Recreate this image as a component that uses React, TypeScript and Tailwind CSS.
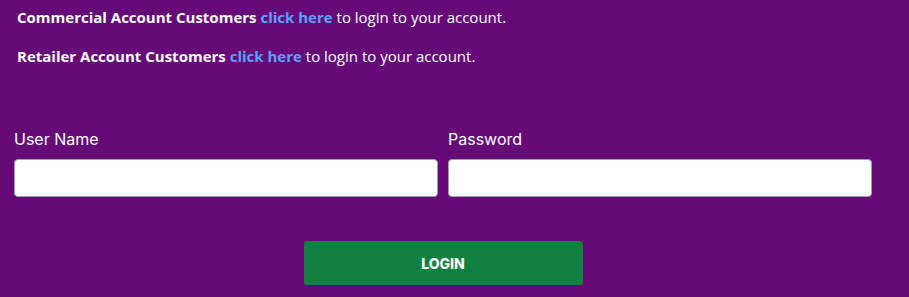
import React from "react";

function LoginLine({ label }: { label: string }) {
  return (
    <p className="text-[15px] leading-5 text-white">
      <span className="font-bold">{label}</span>{" "}
      <a href="#" className="font-bold text-[#58a2ff]">
        click here
      </a>{" "}
      to login to your account.
    </p>
  );
}

export default function App() {
  return (
    <div className="h-[297px] w-full bg-[#660a77] font-['Open_Sans',sans-serif]">
      <div className="flex flex-col gap-[19px] pl-[17px] pt-[7px]">
        <LoginLine label="Commercial Account Customers" />
        <LoginLine label="Retailer Account Customers" />
      </div>
      <form className="ml-[14px] mt-[63px] w-[858px] font-['Inter',sans-serif]">
        <div className="flex gap-[10px]">
          <div className="flex flex-1 flex-col">
            <label className="text-[16px] leading-5 text-white">User Name</label>
            <input className="mt-[10px] h-[38px] rounded-[4px] border border-gray-400 bg-white px-2" />
          </div>
          <div className="flex flex-1 flex-col">
            <label className="text-[16px] leading-5 text-white">Password</label>
            <input type="password" className="mt-[10px] h-[38px] rounded-[4px] border border-gray-400 bg-white px-2" />
          </div>
        </div>
        <div className="mt-[44px] flex justify-center">
          <button type="button" className="h-[44px] w-[279px] rounded-[3px] bg-[#108040] text-[14px] font-extrabold text-white">
            LOGIN
          </button>
        </div>
      </form>
    </div>
  );
}
